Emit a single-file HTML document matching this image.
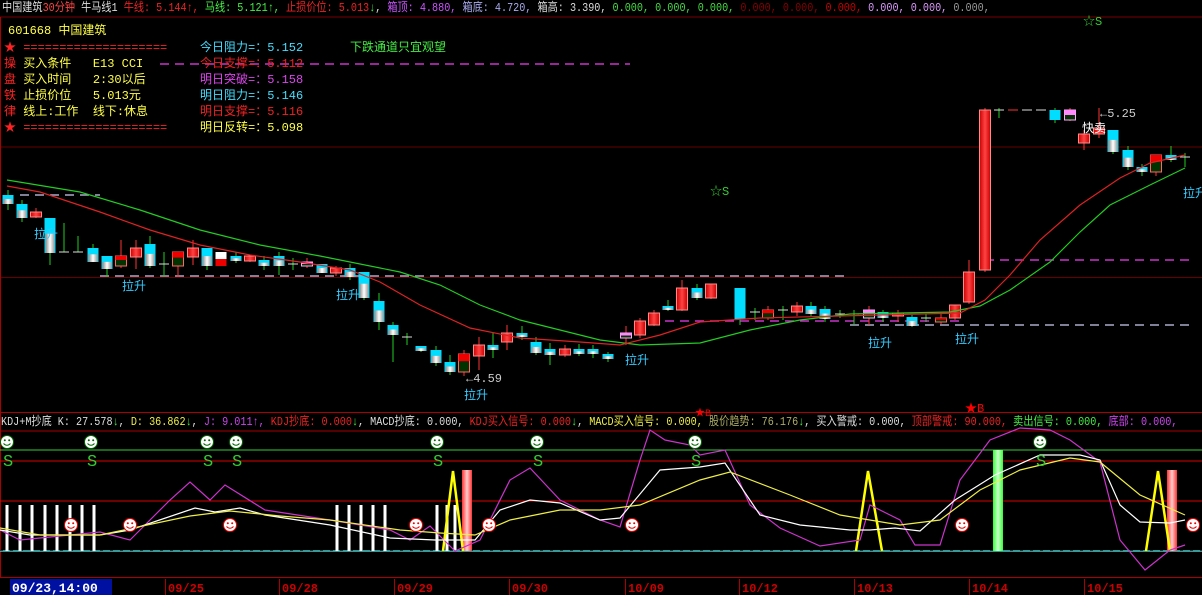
<!DOCTYPE html>
<html><head><meta charset="utf-8">
<style>
body{margin:0;background:#000;width:1202px;height:595px;overflow:hidden;font-family:"Liberation Mono","Noto Sans CJK SC",monospace;}
svg{position:absolute;left:0;top:0}
svg text{font-family:"Liberation Mono","Noto Sans CJK SC",monospace;font-size:12px}
.t{position:absolute;font-size:12px;white-space:nowrap;line-height:14px;font-family:"Liberation Mono","Noto Sans CJK SC",monospace;}
.sc{transform:scaleX(0.845);transform-origin:0 0}
</style></head><body>
<svg id="s" width="1202" height="595" xmlns="http://www.w3.org/2000/svg">
<defs>
<linearGradient id="wg" x1="0" x2="1"><stop offset="0" stop-color="#888"/><stop offset=".5" stop-color="#fff"/><stop offset="1" stop-color="#999"/></linearGradient>
<linearGradient id="rg" x1="0" x2="1"><stop offset="0" stop-color="#c00"/><stop offset=".5" stop-color="#f44"/><stop offset="1" stop-color="#c00"/></linearGradient>
<linearGradient id="rb" x1="0" x2="1"><stop offset="0" stop-color="#f33"/><stop offset=".5" stop-color="#fcc"/><stop offset="1" stop-color="#f33"/></linearGradient>
<linearGradient id="gb" x1="0" x2="1"><stop offset="0" stop-color="#3f3"/><stop offset=".5" stop-color="#cfc"/><stop offset="1" stop-color="#3f3"/></linearGradient>
</defs>
<rect width="1202" height="595" fill="#000"/>
<line x1="0" y1="17" x2="1202" y2="17" stroke="#700" />
<line x1="0" y1="147" x2="1202" y2="147" stroke="#600"/>
<line x1="0" y1="277.5" x2="1202" y2="277.5" stroke="#600"/>
<line x1="0" y1="412.5" x2="1202" y2="412.5" stroke="#a00"/>
<line x1="0" y1="431" x2="1202" y2="431" stroke="#a00"/>
<line x1="0" y1="577.5" x2="1202" y2="577.5" stroke="#a00"/>
<line x1="0.5" y1="17" x2="0.5" y2="578" stroke="#a00"/>
<g stroke-dasharray="9,6" stroke-width="1.5">
<line x1="20" y1="195" x2="100" y2="195" stroke="#aac"/>
<line x1="100" y1="276" x2="845" y2="276" stroke="#aac"/>
<line x1="850" y1="325" x2="1195" y2="325" stroke="#aac"/>
<line x1="160" y1="64" x2="630" y2="64" stroke="#c3c"/>
<line x1="985" y1="260" x2="1195" y2="260" stroke="#c3c"/>
<line x1="665" y1="321" x2="960" y2="321" stroke="#c3c"/>
</g>
<g id="cd"></g>
<polyline fill="none" stroke="#2c2" stroke-width="1.2" points="7,180 80,192 140,210 200,230 260,245 320,256 400,272 440,285 480,305 520,320 560,330 600,340 640,345 700,343 750,330 800,320 850,314 950,312 980,306 1010,290 1050,262 1080,232 1110,205 1150,185 1185,168"/>
<polyline fill="none" stroke="#d22" stroke-width="1.2" points="7,186 40,192 100,212 150,230 200,245 250,255 300,262 350,270 380,282 420,305 470,328 520,338 580,342 620,345 660,335 700,322 760,318 960,313 985,300 1010,275 1040,240 1080,205 1120,178 1150,163 1185,155"/>
<line x1="0" y1="450" x2="1202" y2="450" stroke="#3c3"/>
<line x1="0" y1="461" x2="1202" y2="461" stroke="#d00"/>
<line x1="0" y1="501" x2="1202" y2="501" stroke="#d00"/>
<line x1="0" y1="551" x2="1202" y2="551" stroke="#4cc" stroke-width="1.5"/>
<line x1="0" y1="550.5" x2="1202" y2="550.5" stroke="#333" stroke-dasharray="3,7"/>
<g id="bars"></g>
<rect x="462" y="470" width="10" height="81" fill="url(#rb)"/>
<rect x="1167" y="470" width="10" height="81" fill="url(#rb)"/>
<rect x="993" y="450" width="10" height="101" fill="url(#gb)"/>
<g fill="none" stroke="#ff0" stroke-width="2.5">
<polyline points="443,551 453,471 463,551"/>
<polyline points="856,551 868,471 882,551"/>
<polyline points="1146,551 1158,471 1170,551"/>
</g>
<polyline fill="none" stroke="#c3c" stroke-width="1.2" points="0,530 20,540 50,537 100,532 130,540 170,500 190,482 210,500 225,485 265,510 330,520 390,530 410,540 430,526 455,551 480,540 510,480 530,468 560,500 600,520 620,527 640,460 650,430 665,440 690,445 700,455 725,450 750,505 780,528 820,546 860,540 870,505 900,520 915,545 940,545 960,480 990,440 1020,428 1050,430 1070,440 1100,462 1120,540 1145,570 1170,550 1185,545"/>
<polyline fill="none" stroke="#fff" stroke-width="1.2" points="0,530 30,535 100,535 130,530 195,508 215,512 240,508 265,515 330,525 390,538 435,540 475,540 500,510 530,500 560,503 600,520 620,518 635,500 660,470 700,467 725,463 760,515 800,525 850,530 870,530 895,528 920,531 955,500 995,475 1040,455 1080,455 1100,460 1120,505 1140,522 1170,523 1185,520"/>
<polyline fill="none" stroke="#ee4" stroke-width="1.2" points="0,528 40,535 100,535 190,516 230,511 280,516 330,520 400,530 440,533 475,535 510,520 560,510 600,510 640,505 700,480 730,472 790,495 840,515 900,525 940,520 980,490 1020,470 1070,458 1100,462 1140,495 1185,515"/>
<g id="sm"></g>
<rect x="10" y="579" width="102" height="16" fill="#0010a0"/>
<text x="12" y="592" fill="#fff" style="font-weight:bold;font-size:13px">09/23,14:00</text>
<g fill="#c00" style="font-weight:bold;font-size:13px" id="dates"></g>
<g fill="#3cf" style="font-size:12px">
<text x="34" y="238">拉升</text><text x="122" y="290">拉升</text><text x="336" y="299">拉升</text><text x="464" y="399">拉升</text><text x="625" y="364">拉升</text><text x="868" y="347">拉升</text><text x="955" y="343">拉升</text><text x="1183" y="197">拉升</text>
</g>
<text x="466" y="382" fill="#ccc">←4.59</text>
<text x="1100" y="117" fill="#ccc">←5.25</text>
<text x="1082" y="132" fill="#fff">快卖</text>
<text x="710" y="195" fill="#3c3">☆S</text>
<text x="1083" y="25" fill="#3c3">☆S</text>
<text x="965" y="412" fill="#f00">★B</text>
<text x="695" y="416" fill="#f00" style="font-size:10px">★B</text>
</svg>
<div class="t sc" style="left:2px;top:1px"><span style="color:#ddd">中国建筑</span><span style="color:#f44">30分钟</span><span style="color:#ddd"> 牛马线1 </span><span style="color:#e22">牛线: 5.144↑, </span><span style="color:#4e4">马线: 5.121↑, </span><span style="color:#e22">止损价位: 5.013</span><span style="color:#4e4">↓</span><span style="color:#ddd">, </span><span style="color:#c5f">箱顶: 4.880, </span><span style="color:#aae">箱底: 4.720, </span><span style="color:#ddd">箱高: 3.390, </span><span style="color:#4d4">0.000, 0.000, 0.000, </span><span style="color:#800">0.000, 0.000, </span><span style="color:#c00">0.000, </span><span style="color:#d9f">0.000, 0.000, </span><span style="color:#999">0.000,</span></div>
<div class="t" style="left:8px;top:24px;color:#ff4">601668 中国建筑</div>
<div class="t" style="left:4px;top:40px;color:#f22;line-height:16px">★ ====================<br><span style="color:#f22">操</span> <span style="color:#ff4">买入条件&nbsp;&nbsp;&nbsp;E13 CCI</span><br><span style="color:#f22">盘</span> <span style="color:#ff4">买入时间&nbsp;&nbsp;&nbsp;2:30以后</span><br><span style="color:#f22">铁</span> <span style="color:#ff4">止损价位&nbsp;&nbsp;&nbsp;5.013元</span><br><span style="color:#f22">律</span> <span style="color:#ff4">线上:工作&nbsp;&nbsp;线下:休息</span><br>★ ====================</div>
<div class="t" style="left:200px;top:40px;line-height:16px"><span style="color:#4df">今日阻力=：5.152</span><br><span style="color:#e22">今日支撑=：5.112</span><br><span style="color:#d4e">明日突破=：5.158</span><br><span style="color:#4df">明日阻力=：5.146</span><br><span style="color:#e22">明日支撑=：5.116</span><br><span style="color:#ff4">明日反转=：5.098</span></div>
<div class="t" style="left:350px;top:40px;color:#4e4;line-height:16px">下跌通道只宜观望</div>
<div class="t sc" style="left:1px;top:415px"><span style="color:#ddd">KDJ+M抄底 K: 27.578</span><span style="color:#4e4">↓</span><span style="color:#ddd">, </span><span style="color:#ee4">D: 36.862</span><span style="color:#4e4">↓</span><span style="color:#ddd">, </span><span style="color:#c4e">J: 9.011↑, </span><span style="color:#e22">KDJ抄底: 0.000</span><span style="color:#4e4">↓</span><span style="color:#ddd">, MACD抄底: 0.000, </span><span style="color:#e22">KDJ买入信号: 0.000</span><span style="color:#4e4">↓</span><span style="color:#ddd">, </span><span style="color:#ee4">MACD买入信号: 0.000, </span><span style="color:#aa6">股价趋势: 76.176</span><span style="color:#4e4">↓</span><span style="color:#ddd">, 买入警戒: 0.000, </span><span style="color:#e22">顶部警戒: 90.000, </span><span style="color:#4e4">卖出信号: 0.000, </span><span style="color:#c4e">底部: 0.000,</span></div>
<script>
var NS="http://www.w3.org/2000/svg";
function el(p,t,a){var e=document.createElementNS(NS,t);for(var k in a)e.setAttribute(k,a[k]);p.appendChild(e);return e;}
var cd=document.getElementById('cd');
var C=[[8,195,204,190,210,'c'],[22,204,218,200,222,'c'],[36,212,217,208,218,'r'],[50,218,253,218,265,'c'],[64,252,252,223,252,'d'],[78,252,252,236,252,'d'],[93,248,262,244,262,'c'],[107,256,269,256,277,'c'],[121,256,266,240,268,'k'],[136,248,257,240,269,'r'],[150,244,266,236,268,'c'],[164,264,264,252,277,'d'],[178,252,266,252,277,'k'],[193,248,257,240,265,'r'],[207,248,266,248,270,'c'],[221,252,266,252,266,'rw'],[236,256,261,252,263,'c'],[250,256,261,255,262,'r'],[264,260,266,256,270,'c'],[279,256,266,252,275,'c'],[293,264,264,258,270,'d'],[307,262,266,258,268,'p'],[322,264,273,264,273,'c'],[336,268,273,266,276,'r'],[350,268,277,264,280,'c'],[364,272,298,272,300,'c'],[379,301,322,293,330,'c'],[393,325,335,322,362,'c'],[407,337,337,333,345,'d'],[421,346,351,346,352,'c'],[436,350,363,346,366,'c'],[450,362,372,355,375,'c'],[464,354,372,350,376,'k'],[479,345,356,337,370,'r'],[493,345,350,333,358,'c'],[507,333,342,325,350,'r'],[522,333,337,326,340,'c'],[536,342,353,337,355,'c'],[550,349,355,343,365,'c'],[565,349,355,345,357,'r'],[579,349,354,344,356,'c'],[593,349,354,345,358,'c'],[608,354,359,352,362,'c'],[626,333,338,326,345,'p'],[640,321,335,318,338,'r'],[654,313,325,310,326,'r'],[668,306,310,300,311,'c'],[682,288,310,280,311,'r'],[697,288,298,284,300,'c'],[711,284,298,284,299,'r'],[740,288,319,288,325,'cy'],[755,312,312,308,320,'d'],[768,310,318,306,320,'k'],[783,310,316,306,320,'d'],[797,306,312,302,316,'r'],[811,306,314,302,316,'c'],[825,309,319,306,322,'c'],[840,314,314,310,318,'d'],[854,314,314,310,325,'d'],[869,310,318,306,325,'p'],[883,312,318,310,322,'c'],[898,313,316,310,322,'r'],[912,317,326,315,327,'c'],[926,318,318,314,322,'d'],[941,318,322,313,324,'k'],[955,305,318,305,320,'r'],[969,272,302,260,304,'r'],[985,110,270,108,272,'r'],[999,110,110,108,118,'d'],[1013,110,110,110,110,'dr'],[1027,110,110,110,110,'d'],[1041,110,110,110,110,'d'],[1055,110,120,108,123,'cy'],[1070,110,120,108,121,'p'],[1084,134,143,130,150,'r'],[1099,128,134,108,138,'r'],[1113,130,152,130,154,'c'],[1128,150,167,146,170,'c'],[1142,167,172,164,176,'c'],[1156,155,172,155,176,'k'],[1171,155,160,146,162,'c'],[1185,157,157,153,167,'d']];
C.forEach(function(c){var x=c[0],t=c[1],b=c[2],wt=c[3],wb=c[4],ty=c[5],w=11,l=x-5.5,h=Math.max(b-t,1);
 var wc=(ty=='d')?'#2c2':(ty=='c'||ty=='cy')?'#2c2':'#f33';
 el(cd,'line',{x1:x,y1:wt,x2:x,y2:wb,stroke:wc});
 if(ty=='d'||ty=='dr'){el(cd,'line',{x1:x-5,y1:t,x2:x+5,y2:t,stroke:ty=='dr'?'#f33':'#ddd'});return;}
 if(ty=='c'){el(cd,'rect',{x:l,y:t,width:w,height:h,fill:'#0df'});el(cd,'rect',{x:l+1,y:t+h*0.45,width:w-2,height:h*0.55,fill:'url(#wg)'});}
 else if(ty=='cy'){el(cd,'rect',{x:l,y:t,width:w,height:h,fill:'#0df'});}
 else if(ty=='r'){el(cd,'rect',{x:l,y:t,width:w,height:h,fill:'url(#rg)',stroke:'#f88','stroke-width':1});}
 else if(ty=='rw'){el(cd,'rect',{x:l,y:t,width:w,height:h*0.5,fill:'#fff'});el(cd,'rect',{x:l,y:t+h*0.5,width:w,height:h*0.5,fill:'#e00'});}
 else if(ty=='k'){el(cd,'rect',{x:l,y:t,width:w,height:h,fill:'#030',stroke:'#f66'});el(cd,'rect',{x:l,y:t,width:w,height:h*0.4,fill:'#e00'});}
 else if(ty=='p'){el(cd,'rect',{x:l,y:t,width:w,height:h,fill:'#030',stroke:'#faf'});el(cd,'rect',{x:l,y:t,width:w,height:h*0.5,fill:'#f8f'});}
});
var bars=document.getElementById('bars');
[7,20,32,45,57,70,82,94,337,349,361,373,385,437,447,455].forEach(function(x){el(bars,'rect',{x:x-1.5,y:505,width:3,height:46,fill:'#fff'});});
var sm=document.getElementById('sm');
function face(x,y,bg,fg){el(sm,'circle',{cx:x,cy:y,r:6.5,fill:bg,stroke:fg});el(sm,'circle',{cx:x-2.2,cy:y-1.8,r:1,fill:fg});el(sm,'circle',{cx:x+2.2,cy:y-1.8,r:1,fill:fg});el(sm,'path',{d:'M'+(x-3.5)+' '+(y+1.5)+' Q'+x+' '+(y+5)+' '+(x+3.5)+' '+(y+1.5),fill:'none',stroke:fg});}
[7,91,207,236,437,537,695,1040].forEach(function(x){face(x,442,'#fff','#060');var t=el(sm,'text',{x:x-4,y:466,fill:'#3c3',style:'font-size:17px'});t.textContent='S';});
[71,130,230,416,489,632,962,1193].forEach(function(x){face(x,525,'#fff','#e00');});
var dg=document.getElementById('dates');
[[166,'09/25'],[280,'09/28'],[395,'09/29'],[510,'09/30'],[626,'10/09'],[740,'10/12'],[855,'10/13'],[970,'10/14'],[1085,'10/15']].forEach(function(d){el(dg,'line',{x1:d[0]-0.5,y1:579,x2:d[0]-0.5,y2:595,stroke:'#a00'});var t=el(dg,'text',{x:d[0]+2,y:592});t.textContent=d[1];});
</script>
</body></html>
